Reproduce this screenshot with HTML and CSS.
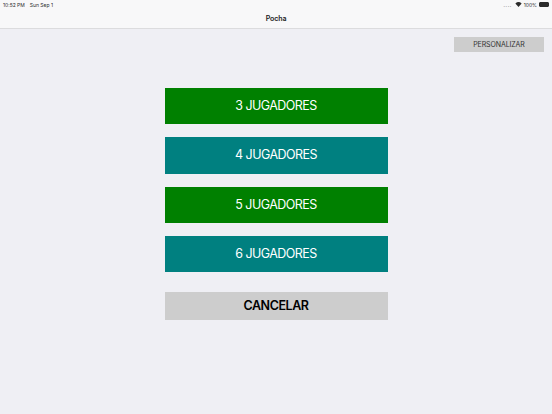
FILE: index.html
```html
<!DOCTYPE html>
<html lang="en">
<head>
  <meta charset="UTF-8" />
  <title>Pocha</title>
  <link rel="stylesheet" href="styles.css">
</head>
<body>
  <div class="header">
    <div class="status-bar">
      <div class="status-left">
        <span>10:52 PM</span>
        <span>Sun Sep 1</span>
      </div>
      <div class="status-right">
        <span class="signal">....</span>
        <svg class="wifi" width="7" height="5" viewBox="0 0 16 12"><path d="M8 12 L0.5 3.6 A11 11 0 0 1 15.5 3.6 Z" fill="#2b2b2b"/></svg>
        <span>100%</span>
        <span class="battery"><span class="battery-fill"></span></span>
      </div>
    </div>
    <h1>Pocha</h1>
  </div>
  <main class="content">
    <div class="top-row">
      <button class="btn-custom">PERSONALIZAR</button>
    </div>
    <div class="menu">
      <button class="btn-player green">3 JUGADORES</button>
      <button class="btn-player teal">4 JUGADORES</button>
      <button class="btn-player green">5 JUGADORES</button>
      <button class="btn-player teal">6 JUGADORES</button>
      <button class="btn-cancel">CANCELAR</button>
    </div>
  </main>
</body>
</html>
```

FILE: styles.css
```css
* {
  box-sizing: border-box;
}
html, body {
  height: 100%;
}
body {
  font-family: Inter, 'Liberation Sans', sans-serif;
  background: #efeff4;
  margin: 0;
  padding: 0;
  color: #000;
  overflow: hidden;
}
.header {
  height: 29px;
  background: #f8f8f9;
  border-bottom: 1px solid #dcdcde;
  display: flex;
  flex-direction: column;
}
.status-bar {
  height: 9px;
  padding: 0 3px;
  display: flex;
  justify-content: space-between;
  align-items: center;
  font-size: 5px;
  color: #2b2b2b;
}
.status-left {
  display: flex;
  gap: 5px;
}
.status-right {
  display: flex;
  align-items: center;
  gap: 2px;
}
.signal {
  color: #777;
  letter-spacing: 0.6px;
  margin-right: 1px;
}
.battery {
  width: 10px;
  height: 5px;
  border: 1px solid #2b2b2b;
  border-radius: 1px;
  display: block;
}
.battery-fill {
  display: block;
  height: 100%;
  background: #2b2b2b;
}
.header h1 {
  margin: 0;
  flex: 1;
  display: flex;
  align-items: center;
  justify-content: center;
  font-size: 7px;
  font-weight: 600;
  letter-spacing: -0.1px;
  color: #222;
  padding-bottom: 1px;
}
.content {
  display: flex;
  flex-direction: column;
}
button {
  font-family: inherit;
  border: none;
  padding: 0;
  display: block;
}
.top-row {
  display: flex;
  justify-content: flex-end;
  padding: 8px 8px 0 0;
}
.btn-custom {
  width: 90px;
  height: 15px;
  background: #cdcdcd;
  color: #333;
  font-size: 7px;
  letter-spacing: -0.1px;
}
.menu {
  width: 223px;
  margin: 36px auto 0;
  display: flex;
  flex-direction: column;
  gap: 13px;
}
.btn-player {
  height: 36.3px;
  color: #fff;
  font-size: 12.5px;
  letter-spacing: -0.55px;
  padding-bottom: 1px;
}
.green {
  background: #008000;
}
.teal {
  background: #008080;
}
.btn-cancel {
  height: 28px;
  margin-top: 6.5px;
  background: #cdcdcd;
  color: #000;
  font-size: 12.5px;
  letter-spacing: -0.45px;
  font-weight: 600;
  padding-bottom: 1px;
}
```
